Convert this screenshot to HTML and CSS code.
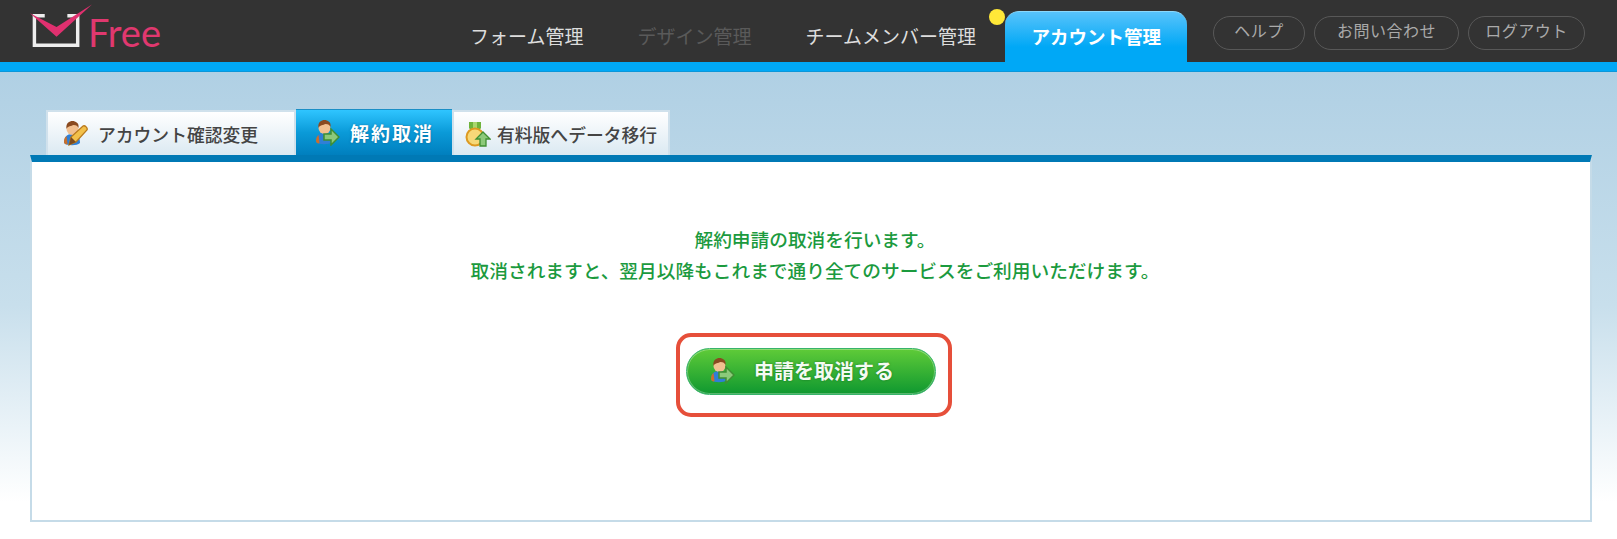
FILE: index.html
```html
<!DOCTYPE html>
<html lang="ja">
<head>
    <meta charset="UTF-8">
    <title>解約取消</title>
    <link rel="stylesheet" href="styles.css">
</head>
<body>
    <svg class="icon-defs" xmlns="http://www.w3.org/2000/svg" width="0" height="0">
        <symbol id="person" viewBox="0 0 26 26">
            <path d="M2 22c0-6 3-9 8-9s8 3 8 9c-3 3-13 3-16 0z" fill="#2f7fd6"/>
            <path d="M2 21c0-3 1-5 2.500-6l1 8c-1 1-3.500 0-3.500-2z" fill="#c9702c"/>
            <circle cx="10.500" cy="8" r="6" fill="#f2c090"/>
            <path d="M4.500 8c-1-6 3-8 6-8s7 2 6 7c-1-2-2-3-5-3-2 1-6 1-7 4z" fill="#8a4a20"/>
        </symbol>
        <symbol id="arrow-right" viewBox="0 0 26 26">
            <path d="M10 14h7v-5l8 8-8 8v-5h-7z" fill="#8cc97a" stroke="#3f8f33" stroke-width="1.500"/>
        </symbol>
        <symbol id="pencil" viewBox="0 0 26 26">
            <path d="M7 24l2-8L21 5c2-1 5 2 4 4L14 21z" fill="#f2c04a" stroke="#b9791c" stroke-width="1.300"/>
            <path d="M7 24l2-8 5 5z" fill="#7a4a20"/>
        </symbol>
        <symbol id="medal" viewBox="0 0 26 26">
            <path d="M4 1h12v6l-3 4H7L4 7z" fill="#6fb33c"/>
            <path d="M8 1h4v9H8z" fill="#a9d66e"/>
            <circle cx="10" cy="16" r="8.500" fill="#f6d878" stroke="#dd9a22" stroke-width="2"/>
            <path d="M18 11l7 7h-4v7h-6v-7h-4z" fill="#8cc97a" stroke="#3f8f33" stroke-width="1.300"/>
        </symbol>
    </svg>

    <header class="top-bar">
        <a class="logo" href="#">
            <svg class="logo-mark" xmlns="http://www.w3.org/2000/svg" viewBox="0 0 64 50" width="64" height="50">
                <path d="M16 12.500H5.500V42.500H49.500V12.500H39" fill="none" stroke="#eee" stroke-width="3.500"/>
                <path d="M1 10L28 34 64 1 28 24z" fill="#e0306f"/>
            </svg>
            <span class="logo-text">Free</span>
        </a>
        <nav class="main-nav">
            <a class="nav-item" href="#">フォーム管理</a>
            <a class="nav-item nav-disabled" href="#">デザイン管理</a>
            <a class="nav-item" href="#">チームメンバー管理</a>
            <a class="nav-item nav-active" href="#">アカウント管理<span class="nav-dot"></span></a>
        </nav>
        <div class="sub-nav">
            <a class="pill pill-help" href="#">ヘルプ</a>
            <a class="pill pill-contact" href="#">お問い合わせ</a>
            <a class="pill pill-logout" href="#">ログアウト</a>
        </div>
    </header>

    <main class="content">
        <div class="tabs">
            <a class="tab tab-account" href="#">
                <svg class="tab-icon"><use href="#person"/><use href="#pencil"/></svg>
                アカウント確認変更
            </a>
            <a class="tab tab-active" href="#">
                <svg class="tab-icon"><use href="#person"/><use href="#arrow-right"/></svg>
                解約取消
            </a>
            <a class="tab tab-upgrade" href="#">
                <svg class="tab-icon"><use href="#medal"/></svg>
                有料版へデータ移行
            </a>
        </div>
        <section class="panel">
            <p class="notice">解約申請の取消を行います。<br>取消されますと、翌月以降もこれまで通り全てのサービスをご利用いただけます。</p>
            <div class="highlight">
                <button class="cancel-button" type="button">
                    <svg class="button-icon"><use href="#person"/><use href="#arrow-right"/></svg>
                    申請を取消する
                </button>
            </div>
        </section>
    </main>
</body>
</html>
```

FILE: styles.css
```css
html, body {
    height: 100%;
}

body {
    margin: 0;
    background: #fff;
    font-family: "Noto Sans CJK JP", "Noto Sans", sans-serif;
    overflow: hidden;
}

a {
    text-decoration: none;
}

.icon-defs {
    display: block;
    position: absolute;
}

/* Cabecera */
.top-bar {
    display: flex;
    align-items: flex-end;
    height: 62px;
    background-color: #333333;
    border-bottom: 9px solid #00a8f6;
    box-shadow: 0 1px 0 #0b97da;
    position: relative;
}

.logo {
    display: flex;
    align-items: flex-start;
    align-self: flex-start;
    width: 132px;
    margin-left: 29px;
    padding-top: 3px;
}

.logo-mark {
    display: block;
    width: 64px;
    height: 50px;
}

.logo-text {
    font-family: Lato, sans-serif;
    font-size: 38px;
    line-height: 50px;
    color: #e0386f;
    margin-left: -4px;
    margin-top: 4px;
}

.main-nav {
    display: flex;
    align-items: flex-end;
    margin-left: 282px;
}

.nav-item {
    position: relative;
    display: block;
    height: 48px;
    line-height: 44px;
    padding: 0 27px;
    font-size: 19px;
    color: #ddd;
    white-space: nowrap;
}

.nav-disabled {
    color: #5a5a5a;
}

.nav-active {
    height: 50px;
    margin-left: 2px;
    line-height: 48px;
    padding: 0 26.500px;
    font-size: 18.500px;
    font-weight: bold;
    color: #fff;
    background: linear-gradient(#58c3fb, #00a8f6 70%);
    border-top: 1px solid #8ad9fd;
    border-radius: 14px 14px 0 0;
}

.nav-dot {
    position: absolute;
    top: -3px;
    left: -16px;
    width: 16px;
    height: 16px;
    border-radius: 50%;
    background-color: #ffe838;
}

.sub-nav {
    display: flex;
    gap: 9px;
    align-self: flex-start;
    margin: 16px 32px 0 auto;
}

.pill {
    display: block;
    box-sizing: border-box;
    height: 34px;
    line-height: 27px;
    text-align: center;
    font-size: 16px;
    letter-spacing: 0.500px;
    color: #aaa;
    border: 1.500px solid #585858;
    border-radius: 17px;
}

.pill-help {
    width: 92px;
}

.pill-contact {
    width: 145px;
}

.pill-logout {
    width: 117px;
}

/* Contenido */
.content {
    height: 467px;
    box-sizing: border-box;
    padding: 38px 25px 17px 30px;
    margin-top: 1px;
    background: linear-gradient(#b0d0e4, #c8dfec 50%, #ffffff 92%);
}

.tabs {
    display: flex;
    align-items: flex-end;
    margin-left: 16px;
    height: 45px;
}

.tab {
    display: flex;
    align-items: center;
    box-sizing: border-box;
    height: 45px;
    font-size: 17.800px;
    font-weight: 500;
    color: #444;
    background: linear-gradient(#ffffff, #dbe9f2);
    border: 2px solid #d0e1ec;
    border-bottom: none;
    white-space: nowrap;
}

.tab-account {
    width: 250px;
    padding-left: 14px;
}

.tab-active {
    width: 156px;
    height: 46px;
    padding-left: 18px;
    font-size: 19px;
    font-weight: bold;
    letter-spacing: 2px;
    color: #fff;
    background: linear-gradient(#2fc5ff, #0a9ad8 50%, #007fbe);
    border: none;
    border-top: 1px solid #1b8fc6;
    text-shadow: 0 0 2px rgba(0, 60, 100, 0.5);
}

.tab-upgrade {
    width: 218px;
    padding-left: 11px;
}

.tab-icon {
    flex: none;
    width: 26px;
    height: 26px;
    margin-right: 10px;
}

.tab-upgrade .tab-icon {
    margin-right: 6px;
}

.panel {
    box-sizing: border-box;
    height: 367px;
    background-color: #fff;
    border: 2px solid #c5dbe8;
    border-top: 7px solid #0079b5;
    display: flex;
    flex-direction: column;
    align-items: center;
}

.notice {
    margin: 61px 0 0;
    padding-left: 8px;
    text-align: center;
    font-size: 18.700px;
    font-weight: 500;
    line-height: 31px;
    color: #1b9a3e;
}

.highlight {
    margin: 48px 0 0 6px;
    box-sizing: border-box;
    width: 276px;
    height: 84px;
    padding: 11px 12px 0 6px;
    border: 4px solid #e64f3a;
    border-radius: 15px;
}

.cancel-button {
    display: flex;
    align-items: center;
    width: 250px;
    height: 47px;
    padding: 0 0 2px 22px;
    font-family: inherit;
    font-size: 20px;
    font-weight: bold;
    color: #f4fbf2;
    text-shadow: 0 0 2px rgba(0, 70, 20, 0.6);
    background: linear-gradient(#5fcb38, #0f9830);
    border: 1px solid #37b46a;
    box-shadow: inset 0 0 0 1px rgba(255, 255, 255, 0.3);
    border-radius: 24px;
}

.button-icon {
    flex: none;
    width: 26px;
    height: 26px;
    margin-right: 19px;
}
```
